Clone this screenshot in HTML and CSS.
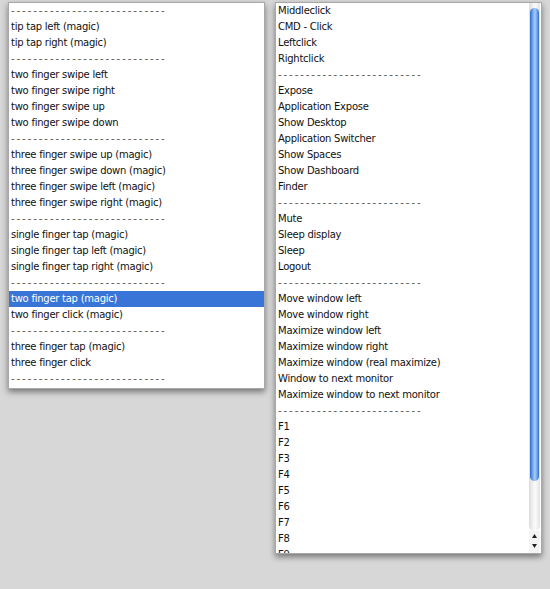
FILE: index.html
```
<!DOCTYPE html>
<html>
<head>
<meta charset="utf-8">
<link rel="stylesheet" href="styles.css">
</head>
<body>
<div class="page">
  <div class="list list-left">
    <div class="row sep">----------------------------</div>
    <div class="row">tip tap left (magic)</div>
    <div class="row">tip tap right (magic)</div>
    <div class="row sep">----------------------------</div>
    <div class="row">two finger swipe left</div>
    <div class="row">two finger swipe right</div>
    <div class="row">two finger swipe up</div>
    <div class="row">two finger swipe down</div>
    <div class="row sep">----------------------------</div>
    <div class="row">three finger swipe up (magic)</div>
    <div class="row">three finger swipe down (magic)</div>
    <div class="row">three finger swipe left (magic)</div>
    <div class="row">three finger swipe right (magic)</div>
    <div class="row sep">----------------------------</div>
    <div class="row">single finger tap (magic)</div>
    <div class="row">single finger tap left (magic)</div>
    <div class="row">single finger tap right (magic)</div>
    <div class="row sep">----------------------------</div>
    <div class="row selected">two finger tap (magic)</div>
    <div class="row">two finger click (magic)</div>
    <div class="row sep">----------------------------</div>
    <div class="row">three finger tap (magic)</div>
    <div class="row">three finger click</div>
    <div class="row sep">----------------------------</div>
  </div>
  <div class="list list-right">
    <div class="items">
      <div class="row">Middleclick</div>
      <div class="row">CMD - Click</div>
      <div class="row">Leftclick</div>
      <div class="row">Rightclick</div>
      <div class="row sep">--------------------------</div>
      <div class="row">Expose</div>
      <div class="row">Application Expose</div>
      <div class="row">Show Desktop</div>
      <div class="row">Application Switcher</div>
      <div class="row">Show Spaces</div>
      <div class="row">Show Dashboard</div>
      <div class="row">Finder</div>
      <div class="row sep">--------------------------</div>
      <div class="row">Mute</div>
      <div class="row">Sleep display</div>
      <div class="row">Sleep</div>
      <div class="row">Logout</div>
      <div class="row sep">--------------------------</div>
      <div class="row">Move window left</div>
      <div class="row">Move window right</div>
      <div class="row">Maximize window left</div>
      <div class="row">Maximize window right</div>
      <div class="row">Maximize window (real maximize)</div>
      <div class="row">Window to next monitor</div>
      <div class="row">Maximize window to next monitor</div>
      <div class="row sep">--------------------------</div>
      <div class="row">F1</div>
      <div class="row">F2</div>
      <div class="row">F3</div>
      <div class="row">F4</div>
      <div class="row">F5</div>
      <div class="row">F6</div>
      <div class="row">F7</div>
      <div class="row">F8</div>
      <div class="row partial">F9</div>
    </div>
    <div class="scrollbar">
      <div class="track">
        <div class="thumb"></div>
      </div>
      <div class="arrows">
        <svg class="arrow" width="11" height="10" viewBox="0 0 11 10"><path d="M3 7 L5.5 3 L8 7 Z" fill="#222"/></svg>
        <svg class="arrow" width="11" height="10" viewBox="0 0 11 10"><path d="M3 3 L5.5 7 L8 3 Z" fill="#222"/></svg>
      </div>
    </div>
  </div>
</div>
</body>
</html>
```
FILE: styles.css
```
html, body {
  margin: 0;
  padding: 0;
}
body {
  background: #d7d7d7;
  width: 550px;
  height: 589px;
  overflow: hidden;
  font-family: "DejaVu Sans", Verdana, sans-serif;
  font-size: 10px;
  letter-spacing: -0.25px;
  color: #111;
}
.page {
  display: flex;
  align-items: flex-start;
  gap: 10px;
  padding: 2px 0 0 8px;
}
.list {
  background: #fff;
  border: 1px solid #a8a8a8;
  box-shadow: 0 3px 6px rgba(0, 0, 0, 0.45);
  box-sizing: border-box;
}
.list-left {
  width: 257px;
  height: 387px;
}
.list-right {
  width: 267px;
  height: 552px;
  display: flex;
  overflow: hidden;
}
.items {
  flex: 1;
  overflow: hidden;
}
.row {
  height: 16px;
  line-height: 16px;
  padding-left: 2px;
  white-space: nowrap;
}
.partial {
  height: 6px;
  overflow: hidden;
}
.sep {
  color: #555;
  letter-spacing: 1.95px;
}
.selected {
  background: #3875d7;
  color: #fff;
}
.scrollbar {
  width: 11px;
  display: flex;
  flex-direction: column;
  margin-right: 1px;
}
.track {
  flex: 1;
  background: linear-gradient(to right, #dcdcdc, #f4f4f4 40%, #fafafa 60%, #e2e2e2);
  border-radius: 0 0 6px 6px;
  padding-top: 5px;
}
.thumb {
  height: 473px;
  margin: 0 1px;
  border-radius: 5px;
  background: linear-gradient(to right, #2f6ccc, #79aef0 35%, #a8cdf6 55%, #6aa0e8 80%, #2f6acb);
}
.arrows {
  height: 22px;
  display: flex;
  flex-direction: column;
  background: #f4f4f4;
}
.arrow {
  display: block;
}
```
